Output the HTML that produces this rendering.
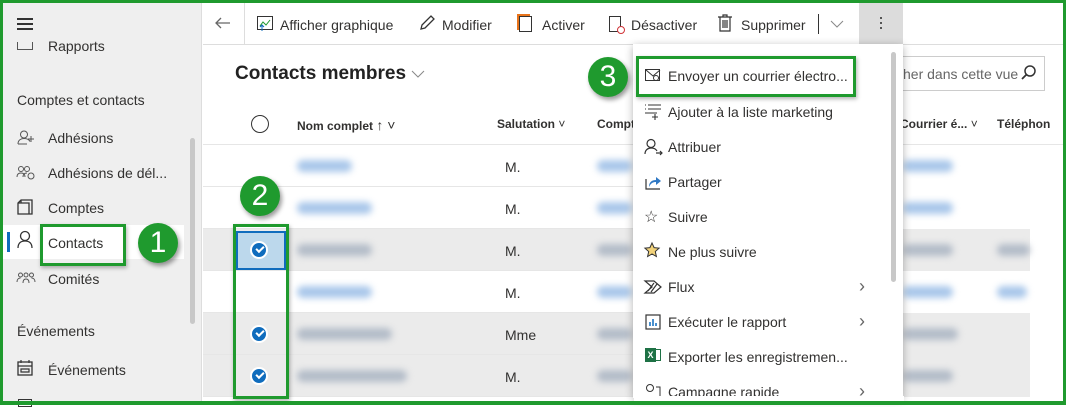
<!DOCTYPE html>
<html><head><meta charset="utf-8"><style>
*{box-sizing:border-box;margin:0;padding:0}
body{width:1066px;height:405px;overflow:hidden;font-family:"Liberation Sans",sans-serif;color:#323130;background:#fff;position:relative;font-size:14px}
.a{position:absolute}
.side{left:0;top:0;width:202px;height:405px;background:#efefef;border-right:1px solid #ddd}
.blur{position:absolute;height:12px;border-radius:6px;filter:blur(3.5px)}
.bl{background:#a9c7ea}
.gr{background:#b3bcc8}
.badge{position:absolute;width:40px;height:40px;border-radius:50%;background:#1f9a2e;color:#fff;font-size:30px;text-align:center;line-height:40px;box-shadow:2px 3px 5px rgba(0,0,0,.4)}
.gbox{position:absolute;border:3px solid #1f9a2e;box-shadow:1px 2px 4px rgba(0,0,0,.3)}
.mi{position:absolute;left:668px;font-size:14px;color:#323130}
.chk{position:absolute;width:16px;height:16px;border-radius:50%;background:#0f6cbd;border:1px solid #fff;box-shadow:0 0 0 1px #fff}
.chk:after{content:"";position:absolute;left:4px;top:3px;width:6px;height:3px;border-left:2px solid #fff;border-bottom:2px solid #fff;transform:rotate(-45deg)}
.row{position:absolute;left:203px;width:700px;height:42px;border-bottom:1px solid #e6e6e6}
.hd{position:absolute;top:117px;font-size:12px;font-weight:bold;color:#323130}
.arr{position:absolute;left:859px;color:#666;font-size:18px}
svg{overflow:visible}
</style></head><body>
<div class="a side"></div>
<div class="a" style="left:17px;top:18px;width:16px;height:1.5px;background:#333;box-shadow:0 5px 0 #333,0 10px 0 #333"></div>
<div class="a" style="left:17px;top:42px;width:16px;height:8px;border:1.5px solid #555;border-top:none"></div>
<div class="a" style="left:48px;top:38px;font-size:14px">Rapports</div>
<div class="a" style="left:17px;top:92px;font-size:14px">Comptes et contacts</div>
<svg class="a" style="left:17px;top:130px" width="18" height="16"><circle cx="7" cy="4.5" r="3.5" fill="none" stroke="#555"/><path d="M1 14c0-4 3-5.5 6-5.5s5 1 6 3M1 14h9M14 6v6M11 9h6" fill="none" stroke="#555"/></svg>
<div class="a" style="left:48px;top:130px">Adhésions</div>
<svg class="a" style="left:17px;top:165px" width="18" height="16"><circle cx="4" cy="4" r="2.5" fill="none" stroke="#555"/><circle cx="10" cy="4" r="2.5" fill="none" stroke="#555"/><path d="M0 12c0-3 2-4 4-4s4 1 4 4M6 12c0-3 2-4 4-4" fill="none" stroke="#555"/><circle cx="14" cy="11" r="3" fill="none" stroke="#555"/></svg>
<div class="a" style="left:48px;top:165px">Adhésions de dél...</div>
<svg class="a" style="left:17px;top:199px" width="16" height="16"><path d="M4 1h11v14H1V4z M1 4h11v11 M4 1v3" fill="none" stroke="#333" stroke-width="1.3"/></svg>
<div class="a" style="left:48px;top:200px">Comptes</div>
<div class="a" style="left:3px;top:225px;width:181px;height:34px;background:#fff"></div>
<div class="a" style="left:7px;top:232px;width:3px;height:20px;background:#0f6cbd"></div>
<svg class="a" style="left:17px;top:231px" width="16" height="18"><circle cx="8" cy="5" r="4.5" fill="none" stroke="#333" stroke-width="1.3"/><path d="M1 17c0-5 3-7 7-7s7 2 7 7" fill="none" stroke="#333" stroke-width="1.3"/></svg>
<div class="a" style="left:48px;top:235px">Contacts</div>
<div class="gbox" style="left:40px;top:224px;width:86px;height:42px"></div>
<div class="badge" style="left:138px;top:223px">1</div>
<svg class="a" style="left:17px;top:272px" width="18" height="14"><circle cx="3.5" cy="3" r="2" fill="none" stroke="#555"/><circle cx="9" cy="3" r="2" fill="none" stroke="#555"/><circle cx="14.5" cy="3" r="2" fill="none" stroke="#555"/><path d="M0 10c0-3 2-4 3.5-4M6 11c0-3 1.5-4 3-4s3 1 3 4M18 10c0-3-2-4-3.5-4" fill="none" stroke="#555"/></svg>
<div class="a" style="left:48px;top:271px">Comités</div>
<div class="a" style="left:190px;top:138px;width:5px;height:186px;background:#c8c8c8;border-radius:3px"></div>
<div class="a" style="left:17px;top:323px">Événements</div>
<svg class="a" style="left:17px;top:360px" width="16" height="16"><rect x="1" y="2" width="14" height="13" fill="none" stroke="#333" stroke-width="1.3"/><path d="M4 0v3M12 0v3M1 6h14M4 9h8v3H4z" fill="none" stroke="#333" stroke-width="1.2"/></svg>
<div class="a" style="left:48px;top:362px">Événements</div>
<div class="a" style="left:18px;top:399px;width:14px;height:8px;border:1.5px solid #333"></div>

<!-- toolbar -->
<div class="a" style="left:203px;top:0;width:863px;height:45px;border-bottom:1px solid #ddd"></div>
<div class="a" style="left:244px;top:3px;width:1px;height:42px;background:#ddd"></div>
<svg class="a" style="left:215px;top:17px" width="16" height="12"><path d="M15 6H1M6 1L1 6l5 5" fill="none" stroke="#666" stroke-width="1.3"/></svg>
<svg class="a" style="left:257px;top:16px" width="17" height="16"><rect x=".5" y=".5" width="15" height="13" fill="none" stroke="#333"/><path d="M3 10l3-4 3 3 4-5" stroke="#1f9a2e" fill="none"/><path d="M5 15V9M3 11l2-2 2 2" stroke="#0f6cbd" fill="none"/></svg>
<div class="a" style="left:280px;top:17px">Afficher graphique</div>
<svg class="a" style="left:419px;top:15px" width="16" height="16"><path d="M2 14l1-4L12 1l3 3-9 9z M2 14l4-1" fill="none" stroke="#333" stroke-width="1.3"/></svg>
<div class="a" style="left:442px;top:17px">Modifier</div>
<div class="a" style="left:519px;top:16px;width:13px;height:16px;border:1.5px solid #333;box-shadow:-2px -2px 0 #e8741b"></div>
<div class="a" style="left:542px;top:17px">Activer</div>
<div class="a" style="left:609px;top:16px;width:12px;height:16px;border:1.5px solid #333"></div>
<div class="a" style="left:617px;top:26px;width:8px;height:8px;border-radius:50%;border:1.5px solid #d13438;background:#fff"></div>
<div class="a" style="left:631px;top:17px">Désactiver</div>
<svg class="a" style="left:718px;top:14px" width="14" height="18"><path d="M0 3h14M5 3V1h4v2M2 3v14h10V3M5 6v8M7 6v8M9 6v8" fill="none" stroke="#333" stroke-width="1.2"/></svg>
<div class="a" style="left:741px;top:17px">Supprimer</div>
<div class="a" style="left:818px;top:14px;width:1px;height:20px;background:#333"></div>
<svg class="a" style="left:831px;top:21px" width="12" height="7"><path d="M0 0l6 6 6-6" fill="none" stroke="#888"/></svg>
<div class="a" style="left:859px;top:3px;width:44px;height:42px;background:#dcdcdc"></div>
<div class="a" style="left:880px;top:17px;width:2px;height:2px;background:#555;box-shadow:0 5px 0 #555,0 10px 0 #555"></div>

<div class="a" style="left:235px;top:63px;font-size:19px;font-weight:bold;color:#222">Contacts membres</div>
<svg class="a" style="left:412px;top:71px" width="12" height="7"><path d="M0 0l6 6 6-6" fill="none" stroke="#888"/></svg>
<div class="a" style="left:852px;top:56px;width:193px;height:35px;border:1px solid #ccc"></div>
<div class="a" style="left:903px;top:66px;color:#666">her dans cette vue</div>
<svg class="a" style="left:1021px;top:65px" width="15" height="15"><circle cx="9" cy="6" r="5" fill="none" stroke="#333" stroke-width="1.5"/><path d="M5.5 9.5L1 14" stroke="#333" stroke-width="1.8"/></svg>
<div class="a" style="left:251px;top:115px;width:18px;height:18px;border:1.5px solid #333;border-radius:50%"></div>
<div class="hd" style="left:297px">Nom complet <span style="font-weight:normal;font-size:14px">↑ ˅</span></div>
<div class="hd" style="left:497px">Salutation <span style="font-weight:normal">˅</span></div>
<div class="hd" style="left:597px">Compt</div>
<div class="hd" style="left:900px">Courrier é... <span style="font-weight:normal">˅</span></div>
<div class="hd" style="left:997px">Téléphon</div>
<div class="a" style="left:203px;top:144px;width:860px;height:1px;background:#e6e6e6"></div>

<div class="row" style="top:145px"></div>
<div class="row" style="top:187px"></div>
<div class="row" style="top:229px;background:#ebebeb"></div>
<div class="row" style="top:271px"></div>
<div class="row" style="top:313px;background:#ebebeb"></div>
<div class="row" style="top:355px;background:#ebebeb"></div>
<div class="a" style="left:900px;top:229px;width:130px;height:42px;background:#ebebeb"></div>
<div class="a" style="left:900px;top:313px;width:130px;height:84px;background:#ebebeb"></div>
<div class="a" style="left:236px;top:231px;width:50px;height:39px;background:#bcd8ec;border:2px solid #0f6cbd"></div>
<div class="chk" style="left:251px;top:242px"></div>
<div class="chk" style="left:251px;top:326px"></div>
<div class="chk" style="left:251px;top:368px"></div>
<div class="gbox" style="left:233px;top:224px;width:56px;height:175px"></div>
<div class="badge" style="left:240px;top:176px">2</div>

<div class="blur bl" style="left:297px;top:160px;width:55px"></div>
<div class="blur bl" style="left:297px;top:202px;width:75px"></div>
<div class="blur gr" style="left:297px;top:244px;width:75px"></div>
<div class="blur bl" style="left:297px;top:286px;width:75px"></div>
<div class="blur gr" style="left:297px;top:328px;width:95px"></div>
<div class="blur gr" style="left:297px;top:370px;width:110px"></div>
<div class="a" style="left:505px;top:159px">M.</div>
<div class="a" style="left:505px;top:201px">M.</div>
<div class="a" style="left:505px;top:243px">M.</div>
<div class="a" style="left:505px;top:285px">M.</div>
<div class="a" style="left:505px;top:327px">Mme</div>
<div class="a" style="left:505px;top:369px">M.</div>
<div class="blur bl" style="left:597px;top:160px;width:35px"></div>
<div class="blur bl" style="left:597px;top:202px;width:35px"></div>
<div class="blur gr" style="left:597px;top:244px;width:35px"></div>
<div class="blur bl" style="left:597px;top:286px;width:35px"></div>
<div class="blur gr" style="left:597px;top:328px;width:35px"></div>
<div class="blur gr" style="left:597px;top:370px;width:35px"></div>
<div class="blur bl" style="left:903px;top:160px;width:50px"></div>
<div class="blur bl" style="left:903px;top:202px;width:50px"></div>
<div class="blur gr" style="left:903px;top:244px;width:50px"></div>
<div class="blur bl" style="left:903px;top:286px;width:50px"></div>
<div class="blur gr" style="left:903px;top:328px;width:55px"></div>
<div class="blur gr" style="left:903px;top:370px;width:50px"></div>
<div class="blur gr" style="left:997px;top:244px;width:33px"></div>
<div class="blur bl" style="left:997px;top:286px;width:30px"></div>

<!-- menu -->
<div class="a" style="left:633px;top:44px;width:270px;height:354px;background:#fff;box-shadow:0 2px 8px rgba(0,0,0,.3)"></div>
<div class="a" style="left:891px;top:52px;width:5px;height:230px;background:#c8c8c8;border-radius:3px"></div>
<svg class="a" style="left:645px;top:69px" width="16" height="13"><rect x=".5" y=".5" width="14" height="11" fill="none" stroke="#333"/><path d="M1 1l7 6 7-6" fill="none" stroke="#333"/><circle cx="11" cy="9" r="2.5" fill="#fff" stroke="#333"/></svg>
<div class="mi" style="top:68px">Envoyer un courrier électro...</div>
<div class="gbox" style="left:636px;top:56px;width:220px;height:41px"></div>
<div class="badge" style="left:588px;top:57px">3</div>
<svg class="a" style="left:645px;top:104px" width="16" height="16"><path d="M3 1h13M3 5h13M0 9h12M10 10v6M7 13h6M0 1h1M0 5h1" fill="none" stroke="#333" stroke-width="1.1"/></svg>
<div class="mi" style="top:104px">Ajouter à la liste marketing</div>
<svg class="a" style="left:645px;top:139px" width="18" height="16"><circle cx="6" cy="4.5" r="4" fill="none" stroke="#333" stroke-width="1.2"/><path d="M0 15c0-4 3-6 6-6s5 1 6 3M11 14h6M15 12l2 2-2 2" fill="none" stroke="#333" stroke-width="1.2"/></svg>
<div class="mi" style="top:139px">Attribuer</div>
<svg class="a" style="left:645px;top:174px" width="16" height="16"><path d="M1 5v10h14" fill="none" stroke="#333" stroke-width="1.2"/><path d="M4 13c0-5 3-7 7-7V3l5 4-5 4V8c-3 0-5 1-7 5z" fill="#2f78c4"/></svg>
<div class="mi" style="top:174px">Partager</div>
<div class="a" style="left:644px;top:207px;font-size:16px">☆</div>
<div class="mi" style="top:209px">Suivre</div>
<svg class="a" style="left:644px;top:242px" width="16" height="16"><path d="M8 1l2.1 4.6 5 .5-3.8 3.4 1.1 5L8 12l-4.4 2.5 1.1-5L.9 6.1l5-.5z" fill="#f2d27a" stroke="#333" stroke-width="1"/></svg>
<div class="mi" style="top:244px">Ne plus suivre</div>
<svg class="a" style="left:644px;top:280px" width="18" height="14"><path d="M1 1h9l7 6-7 6H1l7-6z M4 11l6-8M7 12l6-8" fill="none" stroke="#333" stroke-width="1.2"/></svg>
<div class="mi" style="top:279px">Flux</div>
<div class="arr" style="top:276px">›</div>
<svg class="a" style="left:645px;top:314px" width="16" height="16"><rect x="1" y="1" width="14" height="14" fill="none" stroke="#333" stroke-width="1.2"/><path d="M5 12V8M8 12V5M11 12V9" stroke="#0f6cbd" stroke-width="1.5"/></svg>
<div class="mi" style="top:314px">Exécuter le rapport</div>
<div class="arr" style="top:311px">›</div>
<div class="a" style="left:645px;top:348px;width:11px;height:14px;background:#1e7145;color:#fff;font-size:9px;font-weight:bold;text-align:center;line-height:14px">X</div>
<div class="a" style="left:656px;top:349px;width:5px;height:12px;border:1px solid #1e7145;border-left:none"></div>
<div class="mi" style="top:349px">Exporter les enregistremen...</div>
<svg class="a" style="left:645px;top:384px" width="16" height="14"><circle cx="5" cy="4" r="3.5" fill="none" stroke="#333"/><path d="M11 3h4v10" fill="none" stroke="#333"/></svg>
<div class="mi" style="top:384px">Campagne rapide</div>
<div class="arr" style="top:381px">›</div>
<div class="a" style="left:634px;top:396px;width:270px;height:9px;background:#fff"></div>

<div class="a" style="left:0;top:0;width:1066px;height:405px;border:3px solid #1f9a2e;border-bottom-width:4px"></div>
</body></html>
